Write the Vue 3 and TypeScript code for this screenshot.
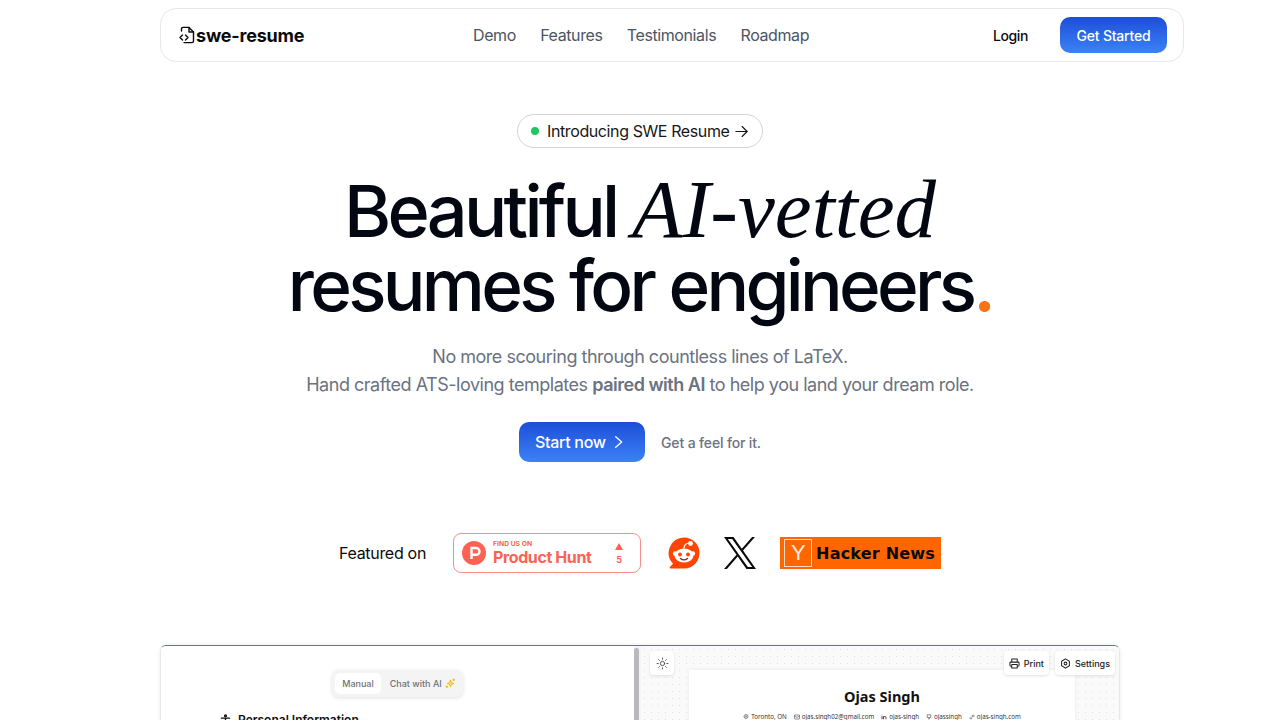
<script setup lang="ts">
const links: string[] = ['Demo', 'Features', 'Testimonials', 'Roadmap']
const contacts: { t: string; k: string }[] = [
  { t: 'Toronto, ON', k: 'pin' },
  { t: 'ojas.singh02@gmail.com', k: 'mail' },
  { t: 'ojas-singh', k: 'in' },
  { t: 'ojassingh', k: 'gh' },
  { t: 'ojas-singh.com', k: 'link' },
]
</script>

<template>
  <div class="page">
    <header class="nav">
      <a class="logo">
        <svg width="16" height="18" viewBox="0 0 16 18" fill="none" stroke="#0a0a0a" stroke-width="1.4" stroke-linecap="round" stroke-linejoin="round">
          <path d="M2.5 5V3a1.6 1.6 0 0 1 1.6-1.6H10l4.5 4.5V15a1.6 1.6 0 0 1-1.6 1.6H5" />
          <path d="M10 1.500V6h4.500" />
          <path d="M3.500 9 1 11.500 3.500 14" />
          <path d="M6.500 9 9 11.500 6.500 14" />
        </svg>
        <span>swe-resume</span>
      </a>
      <nav class="links">
        <a v-for="l in links" :key="l">{{ l }}</a>
      </nav>
      <div class="actions">
        <a class="login">Login</a>
        <a class="cta">Get Started</a>
      </div>
    </header>

    <main class="hero">
      <div class="pill">
        <i class="dot"></i>
        <span>Introducing SWE Resume</span>
        <svg width="15" height="15" viewBox="0 0 24 24" fill="none" stroke="#171717" stroke-width="1.800" stroke-linecap="round" stroke-linejoin="round">
          <path d="M3 12h18" /><path d="m13 4 8 8-8 8" />
        </svg>
      </div>
      <h1>Beautiful <em>AI-vetted</em><br /><span class="l2">resumes for engineers<b>.</b></span></h1>
      <p class="sub">No more scouring through countless lines of LaTeX.<br />Hand crafted ATS-loving templates <strong>paired with AI</strong> to help you land your dream role.</p>
      <div class="buttons">
        <a class="start">
          Start now
          <svg width="16" height="16" viewBox="0 0 24 24" fill="none" stroke="#fff" stroke-width="2" stroke-linecap="round" stroke-linejoin="round"><path d="m7 4 9 8-9 8" /></svg>
        </a>
        <a class="feel">Get a feel for it.</a>
      </div>

      <div class="featured">
        <span class="f-label">Featured on</span>
        <div class="ph">
          <svg width="24" height="24" viewBox="0 0 24 24"><circle cx="12" cy="12" r="12" fill="#ff6154" /><path d="M9.500 18V7h4.600a3.400 3.400 0 0 1 0 6.800H9.500" fill="none" stroke="#fff" stroke-width="2.400" /></svg>
          <div class="ph-text">
            <small>FIND US ON</small>
            <strong>Product Hunt</strong>
          </div>
          <div class="ph-vote">
            <i></i>
            <span>5</span>
          </div>
        </div>
        <svg class="reddit" width="32" height="32" viewBox="0 0 32 32">
          <path d="M16 .5A15.500 15.500 0 1 1 16 31.500H2.500c-.8 0-1.200-1-.6-1.600L5 26.700A15.500 15.500 0 0 1 16 .5Z" fill="#ff4500" />
          <ellipse cx="16" cy="18.500" rx="9.500" ry="7" fill="#fff" />
          <circle cx="7.200" cy="16.500" r="2.300" fill="#fff" />
          <circle cx="24.800" cy="16.500" r="2.300" fill="#fff" />
          <circle cx="12" cy="17.500" r="1.900" fill="#ff4500" />
          <circle cx="20" cy="17.500" r="1.900" fill="#ff4500" />
          <path d="M12.500 21.500c2 1.600 5 1.600 7 0" fill="none" stroke="#842123" stroke-width="1.300" stroke-linecap="round" />
          <path d="M16 11.500c0-3 1-5 5-5.500" fill="none" stroke="#fff" stroke-width="1.200" />
          <circle cx="22.500" cy="6.500" r="2.400" fill="#fff" />
        </svg>
        <svg class="x" width="32" height="32" viewBox="0 0 300 300">
          <path fill-rule="evenodd" d="M178.570 127.150 290.270 0h-26.470l-97.030 110.370L89.340 0H0l117.130 166.930L0 300.250h26.470l102.400-116.590 81.800 116.590h89.340M36.010 19.540H76.670l187.130 262.130h-40.670" fill="#0a0a0a" />
        </svg>
        <div class="hn">
          <span class="y">Y</span>
          <span class="hn-t">Hacker News</span>
        </div>
      </div>

      <section class="preview">
        <div class="left">
          <div class="tabs">
            <span class="tab on">Manual</span>
            <span class="tab ai">Chat with AI
              <svg width="11" height="11" viewBox="0 0 24 24" fill="none" stroke="#eab308" stroke-width="2" stroke-linecap="round" stroke-linejoin="round"><path d="M12 5l2 5 5 2-5 2-2 5-2-5-5-2 5-2z" fill="#fde68a" /><path d="M19 2v4M17 4h4M4 17v4M2 19h4" /></svg>
            </span>
          </div>
          <div class="pi">
            <svg width="11" height="11" viewBox="0 0 24 24" fill="none" stroke="#111" stroke-width="3" stroke-linecap="round"><circle cx="12" cy="4" r="2" /><path d="M3 9h18M12 9v6l-5 7M12 15l5 7" /></svg>
            <span>Personal Information</span>
          </div>
        </div>
        <div class="divider"></div>
        <div class="right">
          <div class="toolbar">
            <span class="tool sun">
              <svg width="13" height="13" viewBox="0 0 24 24" fill="none" stroke="#555" stroke-width="1.800" stroke-linecap="round"><circle cx="12" cy="12" r="4" /><path d="M12 2v2M12 20v2M4.900 4.900l1.500 1.500M17.600 17.600l1.500 1.500M2 12h2M20 12h2M4.900 19.100l1.500-1.500M17.600 6.400l1.500-1.500" /></svg>
            </span>
            <div class="tool-right">
              <span class="tool">
                <svg width="11" height="11" viewBox="0 0 24 24" fill="none" stroke="#222" stroke-width="2.200" stroke-linejoin="round"><path d="M6 9V2h12v7M6 18H4a2 2 0 0 1-2-2v-5a2 2 0 0 1 2-2h16a2 2 0 0 1 2 2v5a2 2 0 0 1-2 2h-2" /><path d="M6 14h12v8H6z" /></svg>
                Print
              </span>
              <span class="tool">
                <svg width="11" height="11" viewBox="0 0 24 24" fill="none" stroke="#222" stroke-width="2.200"><circle cx="12" cy="12" r="3" /><path d="M12 2l8.500 5v10L12 22l-8.500-5V7z" /></svg>
                Settings
              </span>
            </div>
          </div>
          <div class="sheet">
            <div class="name">Ojas Singh</div>
            <div class="contact">
              <span v-for="c in contacts" :key="c.k" class="c">
                <svg width="6" height="6" viewBox="0 0 24 24" fill="none" stroke="#444" stroke-width="2.400">
                  <template v-if="c.k === 'pin'"><circle cx="12" cy="10" r="8" /><circle cx="12" cy="10" r="3" /></template>
                  <template v-else-if="c.k === 'mail'"><rect x="2" y="4" width="20" height="16" rx="2" /><path d="m2 7 10 7 10-7" /></template>
                  <template v-else-if="c.k === 'in'"><path d="M4 9v12M10 21V9M10 14c0-5 10-6 10 0v7M4 3v2" stroke-width="4" /></template>
                  <template v-else-if="c.k === 'gh'"><path d="M5 3h14v11H14v4l-3 3v-7H5z" /></template>
                  <template v-else><path d="M10 14l6-6M8 11l-4 4a4 4 0 0 0 5 5l4-4M16 13l4-4a4 4 0 0 0-5-5l-4 4" /></template>
                </svg>
                {{ c.t }}
              </span>
            </div>
          </div>
        </div>
      </section>
    </main>
  </div>
</template>

<style>
html, body { margin: 0; background: #fff; overflow: hidden; }
</style>

<style scoped>
* { box-sizing: border-box; }
.page {
  height: 720px;
  overflow: hidden;
  font-family: Inter, "Liberation Sans", sans-serif;
  color: #0a0a0a;
  background: #fff;
  padding-top: 8px;
  letter-spacing: -0.025em;
}
.nav {
  width: 1024px;
  height: 54px;
  margin-left: 160px;
  padding: 0 16px 0 18px;
  border: 1px solid #e5e7eb;
  border-radius: 16px;
  display: flex;
  align-items: center;
}
.logo { width: 126px; flex: none; display: flex; align-items: center; gap: 1px; font-size: 18px; font-weight: 700; letter-spacing: -0.2px; color: #0a0a0a; }
.links { margin-left: 168px; display: flex; gap: 24.300px; font-size: 16px; color: #4b5563; }
.actions { margin-left: auto; display: flex; align-items: center; gap: 32px; }
.login { font-size: 14px; font-weight: 500; color: #0a0a0a; }
.cta {
  width: 107px; height: 36px; border-radius: 10px;
  display: flex; align-items: center; justify-content: center;
  font-size: 14px; font-weight: 500; letter-spacing: -0.2px; color: #fff;
  background: linear-gradient(180deg, #1d4ed8, #3b82f6);
}
.hero { display: flex; flex-direction: column; align-items: center; }
.pill {
  margin-top: 52px;
  height: 34px;
  width: 246px;
  border: 1px solid #d4d4d8;
  border-radius: 17px;
  display: flex; align-items: center; justify-content: center;
  gap: 5px;
  font-size: 16px;
  color: #171717;
}
.dot { width: 8px; height: 8px; border-radius: 50%; background: #22c55e; margin-right: 3.500px; }
h1 {
  margin: 24px 0 0;
  font-size: 72px;
  line-height: 74px;
  font-weight: 540;
  letter-spacing: -3.700px;
  text-align: center;
  color: #030712;
}
h1 em { font-family: "Liberation Serif", serif; font-style: italic; font-weight: 400; letter-spacing: 0; font-size: 83px; }
h1 .l2 { font-size: 71px; }
h1 b { color: #f97316; font-weight: 600; }
.sub { margin: 21px 0 0; font-size: 18px; line-height: 28px; letter-spacing: -0.480px; color: #6b7280; text-align: center; }
.sub strong { font-weight: 600; }
.buttons { margin-top: 23px; display: flex; align-items: center; gap: 16px; }
.start {
  width: 126px; height: 40px; border-radius: 10px;
  display: flex; align-items: center; gap: 5px; padding-left: 16px;
  font-size: 16px; font-weight: 500; letter-spacing: -0.3px; color: #fff;
  background: linear-gradient(180deg, #1d4ed8, #3b82f6);
}
.feel { font-size: 14px; font-weight: 500; letter-spacing: -0.15px; color: #6b7280; }
.featured { margin-top: 71px; height: 40px; display: flex; align-items: center; }
.f-label { font-size: 16px; letter-spacing: -0.3px; color: #0a0a0a; margin-right: 27px; }
.ph {
  width: 188px; height: 40px;
  border: 1px solid #f7908a;
  border-radius: 8px;
  display: flex; align-items: center;
  padding-left: 8px;
  gap: 7px;
  color: #ff6154;
  margin-right: 27px;
}
.ph-text { display: flex; flex-direction: column; width: 108px; }
.ph-text small { font-size: 6.800px; line-height: 8px; font-weight: 700; letter-spacing: 0; }
.ph-text strong { font-size: 16px; line-height: 18px; font-weight: 700; white-space: nowrap; }
.ph-vote { display: flex; flex-direction: column; align-items: center; gap: 5px; width: 10px; margin-left: 6px; }
.ph-vote i { width: 0; height: 0; border-left: 4.500px solid transparent; border-right: 4.500px solid transparent; border-bottom: 7px solid #ff6154; }
.ph-vote span { font-size: 9px; line-height: 9px; font-weight: 700; }
.reddit { margin-right: 24px; }
.x { margin-right: 24px; width: 32px; height: 32px; }
.hn {
  width: 161px; height: 32px; background: #ff6600;
  display: flex; align-items: center; padding-left: 4px; gap: 4px;
}
.y { width: 28px; height: 28px; border: 1px solid #fcd9c0; color: #fdeee4; display: flex; align-items: center; justify-content: center; font-size: 22px; font-family: "Liberation Sans", sans-serif; }
.hn-t { font-family: "DejaVu Sans", sans-serif; font-weight: 700; font-size: 16px; letter-spacing: 0.2px; color: #0a0a0a; white-space: nowrap; }
.preview {
  margin-top: 72px;
  width: 960px;
  height: 300px;
  flex: none;
  border-top: 1px solid #6b7280;
  border-left: 1px solid #e5e7eb;
  border-right: 1px solid #e5e7eb;
  border-radius: 6px 6px 0 0;
  display: flex;
  box-shadow: 0 0 4px rgba(0,0,0,.08);
  overflow: hidden;
  letter-spacing: 0;
}
.left { width: 473px; flex: none; background: #fff; display: flex; flex-direction: column; align-items: center; padding-top: 24px; }
.tabs {
  display: flex; align-items: center; height: 27px; padding: 3px; gap: 1px;
  background: #f4f4f5; border-radius: 7px;
  box-shadow: 0 1px 4px rgba(0,0,0,.12);
  font-size: 9px; font-weight: 500; color: #71717a;
}
.tab { height: 21px; padding: 0 7px; display: flex; align-items: center; border-radius: 5px; white-space: nowrap; gap: 3px; }
.tab.ai { padding: 0 4px 0 8px; }
.tab.on { background: #fff; }
.pi { align-self: flex-start; margin: 15px 0 0 59px; display: flex; align-items: center; gap: 7px; font-size: 12px; font-weight: 600; color: #111; white-space: nowrap; }
.divider { width: 7px; flex: none; background: #f3f4f6; display: flex; }
.divider::before { content: ""; width: 5px; background: #b9b9bd; border-radius: 2px; margin: 2px 0; }
.right {
  flex: 1;
  position: relative;
  background-color: #fafafa;
  background-image: radial-gradient(#e0e0e2 0.7px, transparent 0.8px);
  background-size: 7px 7px;
  display: flex; flex-direction: column; align-items: center;
  padding-top: 24px;
}
.toolbar { position: absolute; top: 5px; left: 9px; right: 4px; display: flex; justify-content: space-between; z-index: 1; }
.tool-right { display: flex; gap: 6px; }
.tool {
  height: 24px; padding: 0 5px;
  display: flex; align-items: center; gap: 4px;
  background: #fff; border-radius: 4px;
  box-shadow: 0 1px 3px rgba(0,0,0,.12);
  font-size: 9px; font-weight: 500; color: #222;
}
.sun { width: 24px; justify-content: center; padding: 0; }
.sheet { width: 386px; height: 200px; background: #fff; box-shadow: 0 0 4px rgba(0,0,0,.08); text-align: center; padding-top: 16px; transform: translateX(2px); }
.name { font-family: "Noto Sans", sans-serif; font-size: 14.500px; font-weight: 700; line-height: 20px; color: #111; }
.contact { margin-top: 6px; display: flex; justify-content: center; gap: 7px; font-family: "Noto Sans", sans-serif; font-size: 6.200px; color: #333; white-space: nowrap; }
.c { display: flex; align-items: center; gap: 2px; }
</style>
